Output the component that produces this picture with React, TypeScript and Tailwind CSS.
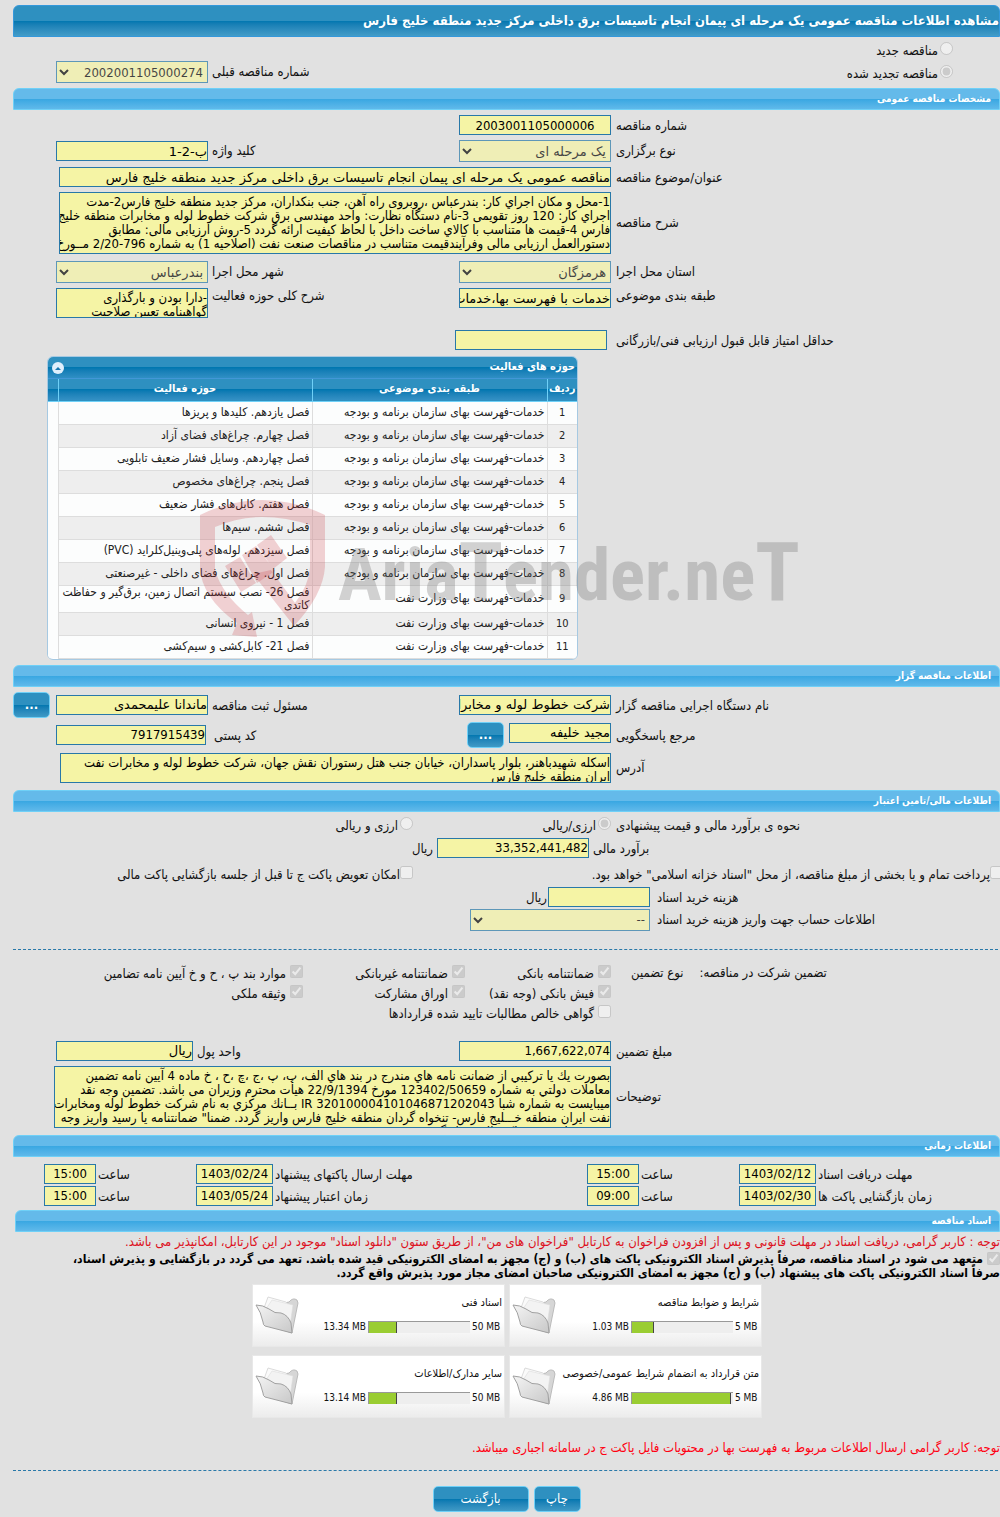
import type { ReactNode } from 'react';

const bar =
  'flex w-full items-center border border-[#6fd0f7] bg-linear-to-b from-[#64baea] from-50% via-[#38a7e2] via-50% to-[#5fb9ea] rounded-t-[6px] h-[22px] px-2 text-[10px] leading-[22px] font-bold text-white';
const box =
  'border border-[#2878a8] bg-[#f5f4a5] text-black text-[13px] leading-[18px] h-5 shrink-0 outline-none';
const area =
  'block resize-none overflow-hidden border border-[#2878a8] bg-[#f5f4a5] pt-0.5 text-[13px] leading-[14px] whitespace-pre text-black outline-none shrink-0';
const blueBtn =
  'shrink-0 rounded-[5px] border border-[#6fd0f7] bg-linear-to-b from-[#2e90c0] from-50% via-[#0077b0] via-50% to-[#3f9ac6] text-white text-[13px]';

const numeric = "font-['DejaVu_Sans_Condensed','DejaVu_Sans',sans-serif]";
const wide = "font-['DejaVu_Sans',sans-serif]";

function faceFor(value: string) {
  return /^[\d-]/.test(value) ? numeric : wide;
}

function Section({ title }: { title: string }) {
  return <h2 className={bar}>{title}</h2>;
}

function Row({ children, className = '' }: { children: ReactNode; className?: string }) {
  return <div className={`flex ${className}`}>{children}</div>;
}

function Label({ children, htmlFor, className = '' }: { children: ReactNode; htmlFor?: string; className?: string }) {
  return (
    <label htmlFor={htmlFor} className={`min-w-0 text-left whitespace-nowrap leading-[22px] ${className}`}>
      {children}
    </label>
  );
}

function Field({ id, value = '', className = 'w-[152px]' }: { id: string; value?: string; className?: string }) {
  return <input id={id} type="text" readOnly defaultValue={value} className={`${box} ${faceFor(value)} ${className}`} />;
}

function Select({ id, value, className = 'w-[152px]' }: { id: string; value: string; className?: string }) {
  return (
    <select
      id={id}
      disabled
      defaultValue={value}
      className={`h-[22px] shrink-0 border border-[#2878a8] bg-[#f5f4a5] text-[13px] text-black opacity-70 ${faceFor(value)} ${className}`}
    >
      <option>{value}</option>
    </select>
  );
}

function Tick({
  type = 'checkbox',
  label,
  checked = false,
  className = '',
  gap = 'gap-1',
}: {
  type?: 'checkbox' | 'radio';
  label: string;
  checked?: boolean;
  className?: string;
  gap?: string;
}) {
  return (
    <label className={`flex items-start whitespace-nowrap ${gap} ${className}`}>
      <input type={type} disabled defaultChecked={checked} className="size-[13px] shrink-0" />
      <span className="leading-[17px]">{label}</span>
    </label>
  );
}

const activities: [string, string][] = [
  ['خدمات-فهرست بهای سازمان برنامه و بودجه', 'فصل یازدهم. کلیدها و پریزها'],
  ['خدمات-فهرست بهای سازمان برنامه و بودجه', 'فصل چهارم. چراغ‌های فضای آزاد'],
  ['خدمات-فهرست بهای سازمان برنامه و بودجه', 'فصل چهاردهم. وسایل فشار ضعیف تابلویی'],
  ['خدمات-فهرست بهای سازمان برنامه و بودجه', 'فصل پنجم. چراغ‌های مخصوص'],
  ['خدمات-فهرست بهای سازمان برنامه و بودجه', 'فصل هفتم. کابل‌های فشار ضعیف'],
  ['خدمات-فهرست بهای سازمان برنامه و بودجه', 'فصل ششم. سیم‌ها'],
  ['خدمات-فهرست بهای سازمان برنامه و بودجه', 'فصل سیزدهم. لوله‌های پلی‌وینیل‌کلراید (PVC)'],
  ['خدمات-فهرست بهای سازمان برنامه و بودجه', 'فصل اول. چراغ‌های فضای داخلی - غیرصنعتی'],
  ['خدمات-فهرست بهای وزارت نفت', 'فصل 26- نصب سیستم اتصال زمین، برق‌گیر و حفاظت کاتدی'],
  ['خدمات-فهرست بهای وزارت نفت', 'فصل 1 - نیروی انسانی'],
  ['خدمات-فهرست بهای وزارت نفت', 'فصل 21- کابل‌کشی و سیم‌کشی'],
];

function ActivityTable() {
  const head = 'border-l border-[#6fd0f7] pb-0.5 font-bold';
  const cell = 'border-l border-b border-[#dddddd] px-0.5 leading-[13px]';
  return (
    <section className="mr-[422px] w-[531px] overflow-hidden rounded-[6px] border border-[#a6c9e2] bg-white text-[11px]">
      <div className="flex h-[22px] items-center justify-between border-b border-[#4297d7] bg-linear-to-b from-[#2e90c0] from-50% via-[#0077b0] via-50% to-[#2f8fc4] pr-0.5 pl-1 font-bold text-white">
        <h3>حوزه های فعالیت</h3>
        <button type="button" aria-label="جمع کردن" className="flex size-3 items-center justify-center rounded-full bg-[#dfeffc]">
          <svg viewBox="0 0 8 4" className="h-1 w-2">
            <path d="M1 4 4 1l3 3z" fill="#1777b0" />
          </svg>
        </button>
      </div>
      <table className="w-full table-fixed border-collapse text-[#222]">
        <colgroup>
          <col className="w-[30px]" />
          <col className="w-[235px]" />
          <col />
          <col className="w-[10px]" />
        </colgroup>
        <thead>
          <tr className="h-[22px] border-b border-[#6fd0f7] bg-linear-to-b from-[#2e90c0] from-50% via-[#0077b0] via-50% to-[#3390c4] text-white">
            <th className={head}>ردیف</th>
            <th className={head}>طبقه بندی موضوعی</th>
            <th className={head}>حوزه فعالیت</th>
            <th aria-label="پایان" />
          </tr>
        </thead>
        <tbody className="text-[12px]">
          {activities.map(([category, field], i) => (
            <tr key={i} className="h-[23px] odd:bg-[#fcfdfd] even:bg-[#eeeeee]">
              <td className={`${cell} text-center text-[11px]`}>{i + 1}</td>
              <td className={cell}>{category}</td>
              <td className={cell}>{field}</td>
              <td className="bg-[#fcfdfd]" />
            </tr>
          ))}
        </tbody>
      </table>
    </section>
  );
}

function Watermark() {
  return (
    <div dir="ltr" className="pointer-events-none absolute top-[142px] left-[185px] flex w-[604px] items-start">
      <svg viewBox="198 498 130 141" className="h-[141px] w-[130px] shrink-0" fill="#c8323c" fillOpacity=".22">
        <path d="M200 515Q230 500 262 500T325 515V567Q323 595 294 626L253 574 271 570 295 603Q309 585 310 567V525Q286 517 262 517T215 527V570Q222 594 248 615L252 612 257 637 232 635 237 623Q201 597 200 567Z" />
        <path d="M225 566 240 557 256 583 241 592ZM242 555 256 546 275 571 257 583ZM257 545 271 535 287 558 273 569Z" />
      </svg>
      <div className="mt-6 ml-2.5 font-['Roboto_Condensed','Liberation_Sans_Narrow','Roboto',sans-serif] text-[73px] leading-[100px] font-bold whitespace-nowrap text-[#6e6e6e]/30">
        Aria<span className="text-[82px]">T</span>ender.ne<span className="text-[82px]">T</span>
      </div>
    </div>
  );
}

function Folder() {
  return (
    <svg viewBox="0 0 46 42" className="h-[42px] w-[46px] shrink-0">
      <defs>
        <linearGradient id="front" x1="0" y1="0" x2="1" y2="1">
          <stop offset="0" stopColor="#f4f4f4" />
          <stop offset="1" stopColor="#c8c8c8" />
        </linearGradient>
      </defs>
      <path d="M8 12 34 7Q38 2 42 5L43 8 37 38 12 30Z" fill="#d6d6d6" stroke="#b0b0b0" strokeWidth=".8" />
      <path d="M9 13 13 2 31 7 36 12 34 30 12 28Z" fill="#fafafa" stroke="#d2d2d2" strokeWidth=".8" />
      <path d="M11 14 17 5 38 10 35 31 13 28Z" fill="#f3f3f3" stroke="#dcdcdc" strokeWidth=".6" />
      <path d="M1 10Q8 10 14 14 20 19 26 18 33 20 36 28L37 38 10 31Q8 30 8 27Q6 17 1 10Z" fill="url(#front)" stroke="#a0a0a0" strokeWidth="1" />
    </svg>
  );
}

function FileCard({ title, used, max, pct }: { title: string; used: string; max: string; pct: number }) {
  return (
    <article className="flex h-[63px] w-[253px] justify-between border border-[#e8e8e8] bg-linear-to-b from-white from-60% to-[#ececec] pt-2.5 pr-0.5 pl-0.5">
      <div className="w-[200px]">
        <h3 className="text-[11px] leading-4 whitespace-nowrap">{title}</h3>
        <div dir="ltr" className="mt-2 flex items-center justify-end gap-0.5 text-[10px] leading-4 whitespace-nowrap">
          <span>{used}</span>
          <div className="h-3 w-[102px] shrink-0 border-t border-l border-[#999] bg-[#eeeeee]">
            <div className="h-full border-r border-[#444] bg-[#9acd32]" style={{ width: `${pct}%` }} />
          </div>
          <span className={max === '5 MB' ? 'w-6' : 'w-[30px]'}>{max}</span>
        </div>
      </div>
      <Folder />
    </article>
  );
}

function TimeRow({ items, className }: { items: [string, string, string][]; className: string }) {
  return (
    <Row className={className}>
      {items.map(([label, date, time], i) => (
        <Row key={label} className={i === 0 ? 'flex-1' : ''}>
          <Label htmlFor={`d${date}`} className={i === 0 ? 'flex-1 pl-0.5' : 'w-[314px] pl-0.5'}>
            {label}
          </Label>
          <Field id={`d${date}`} value={date} className="w-[77px] text-center" />
          <Label htmlFor={`t${date}`} className="w-[100px] pl-0.5">
            ساعت
          </Label>
          <Field id={`t${date}`} value={time} className="w-[52px] text-center" />
        </Row>
      ))}
    </Row>
  );
}

const first = 'flex-1 pl-[5px]';
const second = 'w-[251px] pl-1';

export default function App() {
  return (
    <main
      dir="rtl"
      className="min-h-screen overflow-hidden bg-[#e1e1e1] pt-[5px] pl-[13px] font-['DejaVu_Sans_Condensed','DejaVu_Sans',sans-serif] text-[13px] text-[#111]"
    >
      <h1 className="flex h-8 items-center rounded-t-[6px] border border-[#3498db] bg-linear-to-b from-[#2e90c0] from-50% via-[#0077b0] via-50% to-[#429cc8] text-[13px] font-bold whitespace-nowrap text-white">
        مشاهده اطلاعات مناقصه عمومی یک مرحله ای پیمان انجام تاسیسات برق داخلی مرکز جدید منطقه خلیج فارس
      </h1>
      <Row className="mt-[5px] h-[19px] pr-[47px]">
        <Tick type="radio" label="مناقصه جدید" gap="gap-0.5" />
      </Row>
      <Row className="h-[22px] pr-[47px] pl-[43px]">
        <Tick type="radio" label="مناقصه تجدید شده" checked gap="gap-0.5" className="mt-1 flex-1" />
        <Label htmlFor="prev" className="pl-1">شماره مناقصه قبلی</Label>
        <Select id="prev" value="2002001105000274" />
      </Row>
      <div className="h-[5px]" />
      <Section title="مشخصات مناقصه عمومی" />

      <div className="pl-[43px]">
        <Row className="mt-[5px]">
          <Label htmlFor="num" className={first}>شماره مناقصه</Label>
          <Field id="num" value="2003001105000006" className="w-[152px] text-center" />
          <div className="w-[403px]" />
        </Row>
        <Row className="mt-[3px] h-[22px]">
          <Label htmlFor="kind" className={first}>نوع برگزاری</Label>
          <Select id="kind" value="یک مرحله ای" />
          <Label htmlFor="key" className={second}>کلید واژه</Label>
          <Field id="key" value="ب-2-1" className="mt-px w-[152px]" />
        </Row>
        <Row className="mt-[5px]">
          <Label htmlFor="subject" className={first}>عنوان/موضوع مناقصه</Label>
          <Field
            id="subject"
            value="مناقصه عمومی یک مرحله ای پیمان انجام تاسیسات برق داخلی مرکز جدید منطقه خلیج فارس"
            className="ml-[3px] w-[552px]"
          />
        </Row>
        <Row className="mt-[3px] items-center">
          <Label htmlFor="desc" className={first}>شرح مناقصه</Label>
          <textarea
            id="desc"
            readOnly
            className={`${area} ml-[3px] h-[62px] w-[552px]`}
            defaultValue={`1-محل و مكان اجراي كار: بندرعباس ،روبروی راه آهن، جنب بنكداران، مركز جدید منطقه خلیج فارس2-مدت
اجراي كار: 120 روز تقویمی 3-نام دستگاه نظارت: واحد مهندسی برق شركت خطوط لوله و مخابرات منطقه خلیج
فارس 4-قیمت ها متناسب با كالاي ساخت داخل با لحاظ کیفیت ارائه گردد 5-روش ارزیابی مالی: مطابق
دستورالعمل ارزیابی مالی وفرآیندقیمت متناسب در مناقصات صنعت نفت (اصلاحیه 1) به شماره 796-2/20 مــورخ
1399/02/11`}
          />
        </Row>
        <Row className="mt-[7px]">
          <Label htmlFor="province" className={first}>استان محل اجرا</Label>
          <Select id="province" value="هرمزگان" />
          <Label htmlFor="city" className={second}>شهر محل اجرا</Label>
          <Select id="city" value="بندرعباس" />
        </Row>
        <Row className="mt-[5px] h-[42px]">
          <Label htmlFor="class" className={`${first} leading-[16px]!`}>طبقه بندی موضوعی</Label>
          <Field id="class" value="خدمات با فهرست بها،خدمات" />
          <Label htmlFor="scope" className={`${second} leading-[16px]!`}>شرح کلی حوزه فعالیت</Label>
          <textarea
            id="scope"
            readOnly
            className={`${area} h-[30px] w-[152px]`}
            defaultValue={'-دارا بودن و بارگذاری\nگواهینامه تعیین صلاحیت'}
          />
        </Row>
        <Row className="h-5">
          <Label htmlFor="score" className="flex-1 pl-[9px]">حداقل امتیاز قابل قبول ارزیابی فنی/بازرگانی</Label>
          <Field id="score" className="ml-[399px] w-[152px]" />
        </Row>
      </div>

      <div className="relative mt-1.5">
        <ActivityTable />
        <Watermark />
      </div>

      <div className="h-[5px]" />
      <Section title="اطلاعات مناقصه گزار" />
      <Row className="mt-[5px] h-[26px]">
        <Label htmlFor="org" className={`${first} mt-[3px]`}>نام دستگاه اجرایی مناقصه گزار</Label>
        <Field id="org" value="شرکت خطوط لوله و مخابرات نفت" className="mt-[3px] w-[152px]" />
        <Label htmlFor="clerk" className={`${second} mt-[3px]`}>مسئول ثبت مناقصه</Label>
        <Field id="clerk" value="ماندانا علیمحمدی" className="mt-[3px] w-[152px]" />
        <button type="button" className={`${blueBtn} mr-1.5 h-[26px] w-[37px] font-bold`}>...</button>
      </Row>
      <Row className="mt-1 h-[26px] pl-[43px]">
        <Label htmlFor="ref" className={`${first} mt-[3px]`}>مرجع پاسخگویی</Label>
        <Field id="ref" value="مجید خلیفه" className="mt-px w-[102px]" />
        <button type="button" className={`${blueBtn} mr-[5px] h-[26px] w-[37px] font-bold`}>...</button>
        <Label htmlFor="zip" className="mt-[3px] w-[261px] pl-2">کد پستی</Label>
        <Field id="zip" value="7917915439" className="mt-[3px] w-[150px]" />
      </Row>
      <Row className="mt-[5px] items-center pl-[47px]">
        <Label htmlFor="address" className={first}>آدرس</Label>
        <textarea
          id="address"
          readOnly
          className={`${area} h-[30px] w-[551px]`}
          defaultValue={'اسکله شهیدباهنر، بلوار پاسداران، خیابان جنب هتل رستوران نقش جهان، شرکت خطوط لوله و مخابرات نفت\nایران منطقه خلیج فارس'}
        />
      </Row>

      <div className="h-[7px]" />
      <Section title="اطلاعات مالی/تامین اعتبار" />
      <Row className="mt-[5px] h-[21px]">
        <Label className={`${first} leading-[18px]!`}>نحوه ی برآورد مالی و قیمت پیشنهادی</Label>
        <Tick type="radio" label="ارزی/ریالی" checked gap="gap-0.5" className="w-[198px]" />
        <Tick type="radio" label="ارزی و ریالی" gap="gap-0.5" className="w-[400px]" />
      </Row>
      <Row>
        <Label htmlFor="estimate" className="flex-1 pl-1">برآورد مالی</Label>
        <Field id="estimate" value="33,352,441,482" />
        <span className="w-[424px] pr-1 leading-[22px]">ریال</span>
      </Row>
      <Row className="mt-1.5 h-[21px]">
        <Tick label='پرداخت تمام و یا بخشی از مبلغ مناقصه، از محل "اسناد خزانه اسلامی" خواهد بود.' gap="gap-0" className="-mr-[3px] flex-1" />
        <Tick label="امکان تعویض پاکت ج تا قبل از جلسه بازگشایی پاکت مالی" gap="gap-0" className="w-[400px]" />
      </Row>
      <Row className="h-[22px]">
        <Label htmlFor="fee" className="flex-1 pl-[7px]">هزینه خرید اسناد</Label>
        <Field id="fee" className="w-[102px]" />
        <span className="w-[535px] pr-px leading-[22px]">ریال</span>
      </Row>
      <Row>
        <Label htmlFor="account" className="flex-1 pl-[7px]">اطلاعات حساب جهت واریز هزینه خرید اسناد</Label>
        <Select id="account" value="--" className="ml-[457px] w-[180px]" />
      </Row>

      <hr className="mt-[18px] mr-0.5 border-t border-dashed border-[#2878a8]" />
      <Row className="mt-[15px]">
        <div className="flex flex-1 justify-end gap-4 pl-5 leading-[16px]">
          <span>تضمین شرکت در مناقصه:</span>
          <span>نوع تضمین</span>
        </div>
        <div className="grid w-[598px] grid-cols-[146px_162px_1fr]">
          <Tick label="ضمانتنامه بانکی" checked className="h-5" />
          <Tick label="ضمانتنامه غیربانکی" checked />
          <Tick label="موارد بند پ ، ح و خ آیین نامه تضامین" checked />
          <Tick label="فیش بانکی (وجه نقد)" checked className="h-5" />
          <Tick label="اوراق مشارکت" checked />
          <Tick label="وثیقه ملکی" checked />
          <Tick label="گواهی خالص مطالبات تایید شده قراردادها" className="col-span-3 h-5" />
        </div>
      </Row>
      <Row className="mt-4 pl-[43px]">
        <Label htmlFor="amount" className={first}>مبلغ تضمین</Label>
        <Field id="amount" value="1,667,622,074" />
        <Label htmlFor="unit" className="w-[266px] pl-1">واحد پول</Label>
        <Field id="unit" value="ریال" className="w-[137px]" />
      </Row>
      <Row className="mt-[3px] items-center pl-[41px]">
        <Label htmlFor="notes" className={first}>توضیحات</Label>
        <textarea
          id="notes"
          readOnly
          className={`${area} h-[62px] w-[557px]`}
          defaultValue={`بصورت يك يا تركيبي از ضمانت نامه هاي مندرج در بند هاي الف، ب، پ ،ج ،چ ،ح ، خ ماده 4 آیین نامه تضمین
معاملات دولتي به شماره 123402/50659 مورخ 22/9/1394 هیأت محترم وزیران می باشد. تضمین وجه نقد
میبایست به شماره شبا IR 320100004101046871202043 بــانك مركزي به نام شركت خطوط لوله ومخابرات
نفت ایران منطقه خـــلیج فارس- تنخواه گردان منطقه خلیج فارس واریز گردد. ضمنا" ضمانتنامه یا رسید واریز وجه
نقد می بایست در پاکت الف قرار گیرد.`}
        />
      </Row>

      <div className="h-[7px]" />
      <Section title="اطلاعات زمانی" />
      <div className="pl-[31px]">
        <TimeRow
          className="mt-[7px]"
          items={[
            ['مهلت دریافت اسناد', '1403/02/12', '15:00'],
            ['مهلت ارسال پاکتهای پیشنهاد', '1403/02/24', '15:00'],
          ]}
        />
        <TimeRow
          className="h-[22px]"
          items={[
            ['زمان بازگشایی پاکت ها', '1403/02/30', '09:00'],
            ['زمان اعتبار پیشنهاد', '1403/05/24', '15:00'],
          ]}
        />
      </div>
      <div className="mt-0.5 pl-0.5">
        <Section title="اسناد مناقصه" />
      </div>
      <p className="leading-[20px] whitespace-nowrap text-[#dd1122]">
        توجه : کاربر گرامی، دریافت اسناد در مهلت قانونی و پس از افزودن فراخوان به کارتابل "فراخوان های من"، از طریق ستون "دانلود اسناد" موجود در این کارتابل، امکانپذیر می باشد.
      </p>
      <label className="block text-[12px] leading-[14px] font-bold whitespace-nowrap text-black">
        <input type="checkbox" disabled defaultChecked className="ml-1 size-[13px] align-top" />
        متعهد می شود در اسناد مناقصه، صرفاً پذیرش اسناد الکترونیکی پاکت های (ب) و (ج) مجهز به امضای الکترونیکی قید شده باشد. تعهد می گردد در بازگشایی و پذیرش اسناد،
        <br />
        صرفاً اسناد الکترونیکی پاکت های پیشنهاد (ب) و (ج) مجهز به امضای الکترونیکی صاحبان امضای مجاز مورد پذیرش واقع گردد.
      </label>
      <div className="mt-1 flex justify-center pl-px">
        <div className="grid grid-cols-2 gap-x-1 gap-y-2">
          <FileCard title="شرایط و ضوابط مناقصه" used="1.03 MB" max="5 MB" pct={22} />
          <FileCard title="اسناد فنی" used="13.34 MB" max="50 MB" pct={28} />
          <FileCard title="متن قرارداد به انضمام شرایط عمومی/خصوصی" used="4.86 MB" max="5 MB" pct={98} />
          <FileCard title="سایر مدارک/اطلاعات" used="13.14 MB" max="50 MB" pct={28} />
        </div>
      </div>
      <p className="mt-5 leading-[20px] text-[#ff0011]">
        توجه: کاربر گرامی ارسال اطلاعات مربوط به فهرست بها در محتویات فایل پاکت ج در سامانه اجباری میباشد.
      </p>
      <hr className="mt-3 mr-0.5 border-t border-dashed border-[#2878a8]" />
      <div className="mt-[15px] flex justify-center gap-[5px] pb-[5px]">
        <button type="button" className={`${blueBtn} h-[26px] w-[47px]`}>چاپ</button>
        <button type="button" className={`${blueBtn} h-[26px] w-24`}>بازگشت</button>
      </div>
    </main>
  );
}
